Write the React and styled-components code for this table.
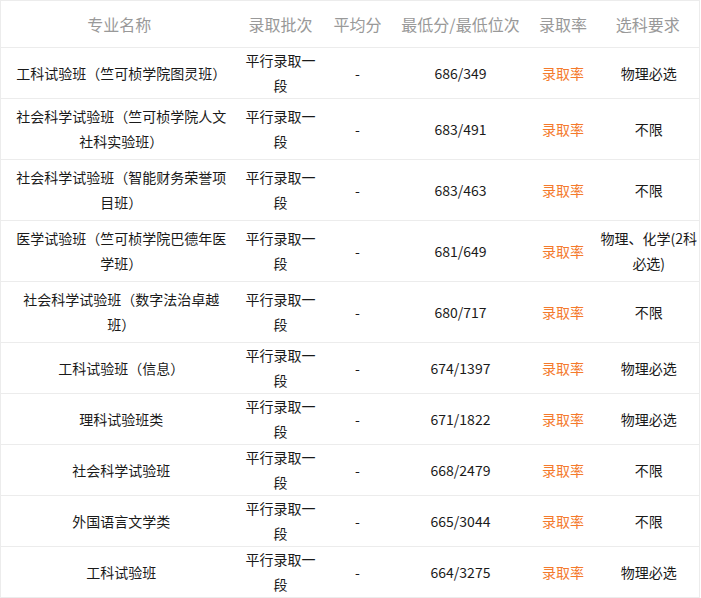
import React from "react";
import styled, { createGlobalStyle } from "styled-components";

const Global = createGlobalStyle`
  html, body { margin: 0; padding: 0; background: #fff; }
  body { font-family: "Microsoft YaHei", "Noto Sans CJK SC", "Noto Sans", sans-serif; }
`;

const Table = styled.table`
  width: 699px;
  table-layout: fixed;
  border-collapse: collapse;
  border: 1px solid #ececec;
  font-size: 14px;
  color: #333;
`;

const HeadCell = styled.th`
  height: 46px;
  padding: 0;
  font-size: 16px;
  font-weight: normal;
  color: #999;
  text-align: center;
  vertical-align: middle;
  border-bottom: 1px solid #ececec;
  white-space: nowrap;
`;

const Row = styled.tr`
  border-bottom: 1px solid #ececec;
`;

const Cell = styled.td`
  padding: ${(p) => p.$pad || "0"};
  line-height: 25px;
  text-align: center;
  vertical-align: middle;
  color: ${(p) => (p.$accent ? "#f47a2c" : "#1a1a1a")};
`;

const cols = [237, 86, 68, 138, 67, 103];
const headers = ["专业名称", "录取批次", "平均分", "最低分/最低位次", "录取率", "选科要求"];

const rows = [
  ["工科试验班（竺可桢学院图灵班）", "686/349", "物理必选"],
  ["社会科学试验班（竺可桢学院人文社科实验班）", "683/491", "不限"],
  ["社会科学试验班（智能财务荣誉项目班）", "683/463", "不限"],
  ["医学试验班（竺可桢学院巴德年医学班）", "681/649", "物理、化学(2科必选)"],
  ["社会科学试验班（数字法治卓越班）", "680/717", "不限"],
  ["工科试验班（信息）", "674/1397", "物理必选"],
  ["理科试验班类", "671/1822", "物理必选"],
  ["社会科学试验班", "668/2479", "不限"],
  ["外国语言文学类", "665/3044", "不限"],
  ["工科试验班", "664/3275", "物理必选"],
];

export default function App() {
  return (
    <>
      <Global />
      <Table>
        <colgroup>
          {cols.map((w, i) => (
            <col key={i} style={{ width: w }} />
          ))}
        </colgroup>
        <thead>
          <tr>
            {headers.map((h) => (
              <HeadCell key={h}>{h}</HeadCell>
            ))}
          </tr>
        </thead>
        <tbody>
          {rows.map(([name, score, req]) => (
            <Row key={name}>
              <Cell $pad="5px 10px 5px 14px">{name}</Cell>
              <Cell $pad="0 5px">平行录取一段</Cell>
              <Cell>-</Cell>
              <Cell>{score}</Cell>
              <Cell $accent>录取率</Cell>
              <Cell $pad="0 1px 0 3px">{req}</Cell>
            </Row>
          ))}
        </tbody>
      </Table>
    </>
  );
}
